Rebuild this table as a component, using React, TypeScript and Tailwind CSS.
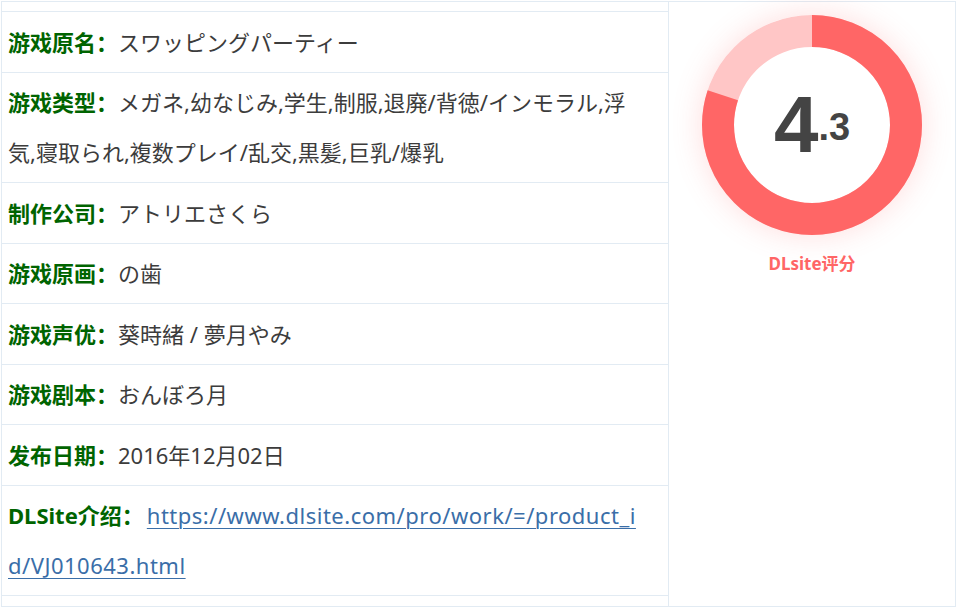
import React from "react";

const rows: { label: string; value: React.ReactNode }[] = [
  { label: "游戏原名：", value: "スワッピングパーティー" },
  {
    label: "游戏类型：",
    value:
      "メガネ,幼なじみ,学生,制服,退廃/背徳/インモラル,浮気,寝取られ,複数プレイ/乱交,黒髪,巨乳/爆乳",
  },
  { label: "制作公司：", value: "アトリエさくら" },
  { label: "游戏原画：", value: "の歯" },
  { label: "游戏声优：", value: "葵時緒 / 夢月やみ" },
  { label: "游戏剧本：", value: "おんぼろ月" },
  { label: "发布日期：", value: "2016年12月02日" },
  {
    label: "DLSite介绍：",
    value: (
      <a
        href="#"
        className="ml-[3px] text-[#3a6ea8] underline underline-offset-[4px] decoration-1 tracking-[0.5px]"
      >
        https://www.dlsite.com/pro/work/=/product_id/VJ010643.html
      </a>
    ),
  },
];

export default function App() {
  const r = 94;
  const c = 2 * Math.PI * r;
  const pct = 0.8;
  return (
    <div
      className="bg-white w-[957px] h-[612px] pt-px pl-px"
      style={{ fontFamily: '"Noto Sans", "Noto Sans CJK SC", sans-serif' }}
    >
      <div className="flex w-[955px] h-[606px] border border-[#e2ebf3]">
        <div className="w-[667px] border-r border-[#e2ebf3] pt-[9px]">
          {rows.map((row, i) => (
            <div
              key={i}
              className={`border-t border-[#e2ebf3] pl-[6px] pr-[20px] py-[4.75px] text-[22px] leading-[50px] text-[#3c3c3c] break-all ${
                i === rows.length - 1 ? "border-b" : ""
              }`}
            >
              <span className="font-bold text-[#006400]">{row.label}</span>
              {row.value}
            </div>
          ))}
        </div>
        <div className="flex-1 flex flex-col items-center pt-[13px]">
          <div className="relative w-[220px] h-[220px] rounded-full shadow-[0_0_30px_rgba(255,102,102,0.22)]">
            <svg width="220" height="220" viewBox="0 0 220 220" className="absolute inset-0">
              <circle cx="110" cy="110" r={r} fill="none" stroke="#ffc6c6" strokeWidth="32" />
              <circle
                cx="110"
                cy="110"
                r={r}
                fill="none"
                stroke="#ff6666"
                strokeWidth="32"
                strokeDasharray={`${c * pct} ${c}`}
                transform="rotate(-90 110 110)"
              />
            </svg>
            <div className="absolute inset-0 flex items-center justify-center">
              <div
                className="flex items-baseline text-[#444] font-bold leading-none"
                style={{ fontFamily: '"Liberation Sans", Arial, sans-serif' }}
              >
                <span className="text-[80px]">4</span>
                <span className="text-[38px] relative -top-[12px]">.3</span>
              </div>
            </div>
          </div>
          <div className="mt-[17px] text-[17px] font-bold text-[#ff6666] leading-[24px]">
            DLsite评分
          </div>
        </div>
      </div>
    </div>
  );
}
